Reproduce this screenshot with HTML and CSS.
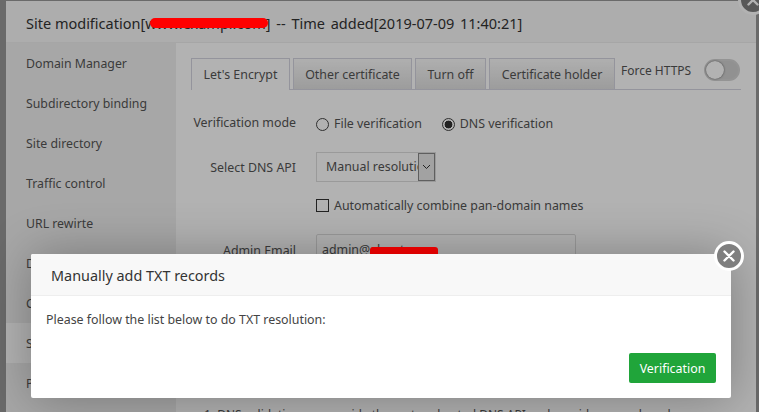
FILE: index.html
```html
<!DOCTYPE html>
<html lang="en">
<head>
<meta charset="utf-8">
<title>Site modification</title>
<link rel="stylesheet" href="styles.css">
</head>
<body>
<div class="stage">
  <section class="site">
    <header class="site-head">Site modification[www.exampl.com<span class="head-tail">] -- Time added[2019-07-09 11:40:21]</span></header>
    <div class="site-body">
      <nav class="side">
        <a class="side-item">Domain Manager</a>
        <a class="side-item">Subdirectory binding</a>
        <a class="side-item">Site directory</a>
        <a class="side-item">Traffic control</a>
        <a class="side-item">URL rewirte</a>
        <a class="side-item">Default document</a>
        <a class="side-item">Configuration file</a>
        <a class="side-item active">SSL</a>
        <a class="side-item">PHP version</a>
      </nav>
      <main class="panel">
        <div class="tabs">
          <span class="tab current t-le">Let's Encrypt</span>
          <span class="tab t-other">Other certificate</span>
          <span class="tab t-off">Turn off</span>
          <span class="tab t-holder">Certificate holder</span>
          <span class="force">Force HTTPS</span>
          <span class="toggle"><i class="knob"></i></span>
        </div>
        <div class="row row-mode">
          <label class="row-label">Verification mode</label>
          <span class="radio"></span><span class="opt">File verification</span>
          <span class="radio on"></span><span class="opt">DNS verification</span>
        </div>
        <div class="row row-api">
          <label class="row-label">Select DNS API</label>
          <span class="select"><span class="select-text">Manual resolution</span><span class="select-btn"><svg width="9" height="6" viewBox="0 0 9 6"><path d="M1 1l3.5 3.5L8 1" fill="none" stroke="#333" stroke-width="1"/></svg></span></span>
        </div>
        <div class="row row-check">
          <span class="check"></span><span class="opt">Automatically combine pan-domain names</span>
        </div>
        <div class="row row-mail">
          <label class="row-label">Admin Email</label>
          <span class="mail">admin@about.cn</span>
        </div>
        <p class="hint">1, DNS validation can provide the system-hosted DNS API and provide manual mode</p>
      </main>
    </div>
  </section>
  <span class="close close-top"><svg width="14" height="14" viewBox="0 0 14 14"><path d="M2.5 2.5l9 9M11.5 2.5l-9 9" stroke="#fff" stroke-width="2.4" stroke-linecap="round"/></svg></span>
  <div class="shade"></div>
  <span class="redact r1"></span>
  <span class="redact r2"></span>
  <section class="modal">
    <header class="modal-head">Manually add TXT records</header>
    <div class="modal-body">
      <p class="modal-text">Please follow the list below to do TXT resolution:</p>
      <div class="modal-foot"><button class="verify">Verification</button></div>
    </div>
  </section>
  <span class="close close-modal"><svg width="14" height="14" viewBox="0 0 14 14"><path d="M2.5 2.5l9 9M11.5 2.5l-9 9" stroke="#fff" stroke-width="2.4" stroke-linecap="round"/></svg></span>
</div>
</body>
</html>
```
FILE: styles.css
```css
* { box-sizing: border-box; }
html, body { margin: 0; padding: 0; }
body { width: 759px; height: 412px; overflow: hidden; font-family: "Noto Sans", "Open Sans", sans-serif; color: #555; }
.stage { position: relative; width: 759px; height: 412px; overflow: hidden; background: #999; }
.site { position: absolute; left: 6px; top: 1px; width: 750px; height: 500px; background: #fff; display: flex; flex-direction: column; }
.site-head { height: 42px; flex: none; background: #f8f8f8; border-bottom: 1px solid #eee; padding-left: 20px; line-height: 44px; font-size: 14.5px; color: #333; white-space: nowrap; }
.head-tail { word-spacing: 2px; }
.redact { position: absolute; display: block; background: #f00; }
.r1 { left: 150px; top: 18px; width: 118px; height: 10px; border-radius: 5px; }
.r2 { left: 370px; top: 247px; width: 68px; height: 10px; border-radius: 3px 3px 0 0; }
.site-body { display: flex; flex: 1; }
.side { width: 170px; flex: none; background: #f0f0f0; }
.side-item { display: block; height: 40px; line-height: 40px; padding: 1px 0 0 20px; font-size: 12.3px; color: #555; white-space: nowrap; }
.side-item.active { background: #fff; }
.panel { flex: 1; padding: 15px 15px 0; background: #fff; }
.tabs { display: flex; align-items: flex-start; height: 32px; border-bottom: 1px solid #d5d5e0; width: 550px; }
.tab { height: 31px; margin-right: 3px; line-height: 32px; font-size: 12.4px; color: #555; text-align: center; background: linear-gradient(#fbfbfb, #e0e0e0); border: 1px solid #d5d5e0; border-bottom: 0; white-space: nowrap; flex: none; }
.tab.current { background: #fff; height: 32px; }
.t-le { width: 99px; }
.t-other { width: 119px; }
.t-off { width: 71px; }
.t-holder { width: 126px; margin-right: 0; }
.force { font-size: 12px; line-height: 26px; margin-left: 6px; color: #555; white-space: nowrap; }
.toggle { width: 36px; height: 22px; border-radius: 11px; background: #d0d0d0; border: 2px solid #d4d4d4; margin: 1px 0 0 13px; display: block; }
.knob { display: block; width: 18px; height: 18px; border-radius: 50%; background: #fff; box-shadow: 0 0 2px rgba(0,0,0,.6); }
.row { display: flex; align-items: center; font-size: 12.4px; color: #555; white-space: nowrap; }
.row-label { width: 105px; margin-right: 20px; text-align: right; flex: none; }
.opt { font-size: 12.4px; color: #555; }
.row-mode { margin-top: 24px; height: 20px; }
.row-mode .row-label { margin-top: -3px; }
.row-mode .opt { margin-top: -1px; }
.radio { width: 13px; height: 13px; border: 1px solid #444; border-radius: 50%; margin-right: 5px; background: #fff; display: block; flex: none; }
.radio.on { margin-left: 20px; background: radial-gradient(circle, #333 0 3.6px, #fff 4.2px); }
.row-api { margin-top: 18px; height: 30px; }
.select { width: 120px; height: 30px; border: 1px solid #ddd; display: flex; font-size: 12.4px; overflow: hidden; }
.select-text { width: 101px; overflow: hidden; padding-left: 9px; line-height: 27px; }
.select-btn { width: 17px; height: 28px; background: #e9e9e9; border: 1px solid #888; display: flex; align-items: center; justify-content: center; }
.row-check { margin-top: 15px; height: 16px; padding-left: 125px; }
.check { width: 13px; height: 13px; border: 1px solid #333; background: #fff; margin-right: 5px; display: block; flex: none; }
.row-mail { margin-top: 21px; height: 32px; }
.mail { width: 260px; height: 38px; border: 1px solid #ddd; border-radius: 2px; padding-left: 5px; line-height: 30px; display: block; align-self: flex-start; }
.hint { margin: 140px 0 0 13px; font-size: 12px; white-space: nowrap; }
.shade { position: absolute; inset: 0; background: rgba(0,0,0,.3); }
.close-top { top: -15px; left: 738px; }
.modal { position: absolute; left: 31px; top: 254px; width: 700px; height: 144px; background: #fff; border-radius: 2px; box-shadow: 1px 1px 50px rgba(0,0,0,.3); display: flex; flex-direction: column; }
.modal-head { height: 42px; flex: none; background: #f8f8f8; border-bottom: 1px solid #eee; line-height: 44px; padding-left: 20px; font-size: 14.4px; color: #333; border-radius: 2px 2px 0 0; }
.modal-body { flex: 1; padding: 15px; display: flex; flex-direction: column; justify-content: space-between; }
.modal-text { margin: 0; font-size: 12.4px; line-height: 18px; color: #444; }
.modal-foot { display: flex; justify-content: flex-end; }
.verify { width: 87px; height: 30px; border: 0; border-radius: 2px; background: #20a53a; color: #fff; font: 12.4px "Noto Sans", sans-serif; padding: 0; }
.close { position: absolute; width: 30px; height: 30px; border-radius: 50%; background: #7f7f7f; border: 3px solid #fff; display: flex; align-items: center; justify-content: center; }
.close-modal { left: 714px; top: 241px; }
```
